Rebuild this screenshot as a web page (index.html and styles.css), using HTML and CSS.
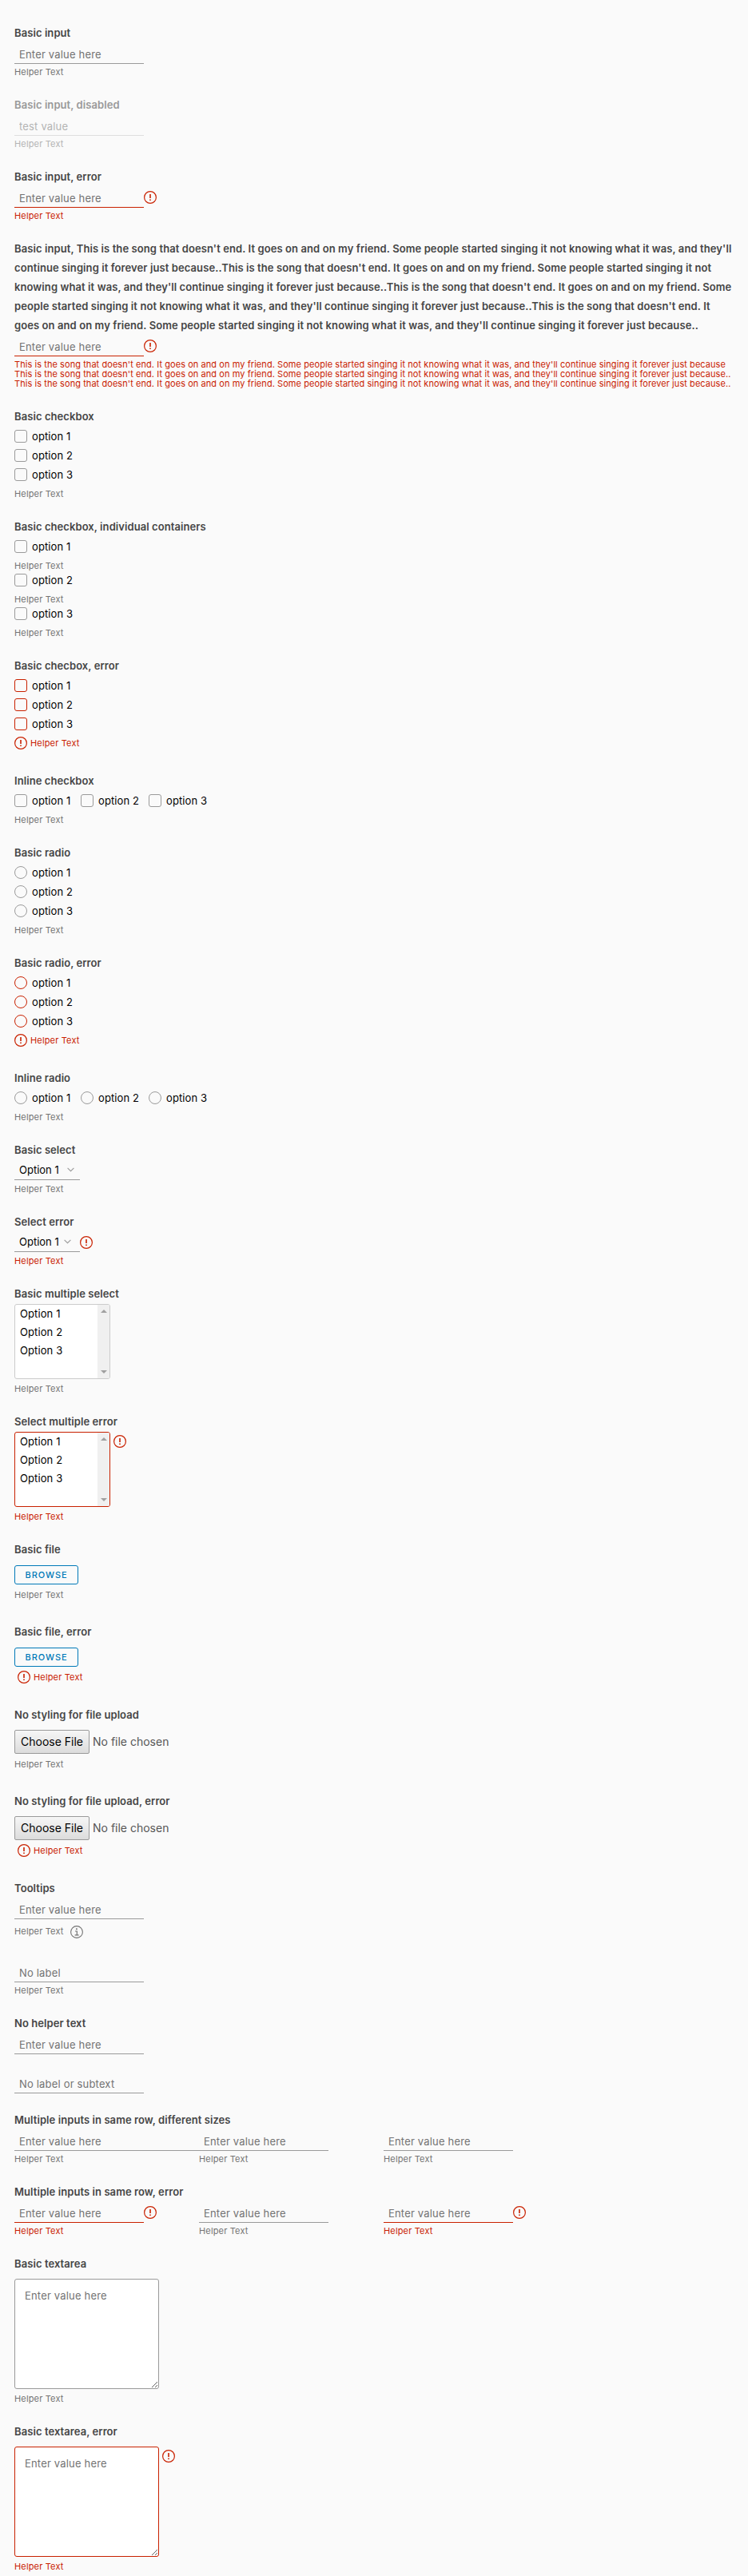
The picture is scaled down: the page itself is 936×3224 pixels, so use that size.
FILE: index.html
```html
<!DOCTYPE html>
<html lang="en"><head><meta charset="utf-8"><title>Forms</title><link rel="stylesheet" href="styles.css"></head>
<body>
<svg width="0" height="0" class="defs">
<symbol id="err" viewBox="0 0 16 16"><circle cx="8" cy="8" r="7.4" fill="none" stroke="currentColor" stroke-width="1.2"/><path d="M8 4v5M8 10.6v1.5" stroke="currentColor" stroke-width="1.6" fill="none"/></symbol>
<symbol id="info" viewBox="0 0 16 16"><circle cx="8" cy="8" r="7.4" fill="none" stroke="currentColor" stroke-width="1.1"/><circle cx="7.9" cy="4.2" r="1" fill="currentColor"/><path d="M6 7h2.3v4.6M5.6 11.9h5" stroke="currentColor" stroke-width="1.2" fill="none"/></symbol>
<symbol id="chev" viewBox="0 0 9 6"><path d="M.6 .8L4.5 4.7L8.4 .8" fill="none" stroke="currentColor" stroke-width="1.1"/></symbol>
</svg>
<form class="form" id="form"></form>
<script src="app.js"></script>
</body></html>
```
FILE: styles.css
```css
* { box-sizing: border-box; }
body { margin: 0; background: #fafafa; color: #000; font: 13px/24px Inter, "Noto Sans", sans-serif; }
.defs { display: block; height: 0; }
.form { display: flex; flex-direction: column; gap: 24px; padding: 30px 18px 6px; }
.group { min-width: 0; }
.label { display: block; font-weight: 600; color: #454545; letter-spacing: .075px; height: 25px; margin-top: -1px; padding-bottom: 1px; white-space: nowrap; }
.label.long { height: auto; letter-spacing: .09px; }
.helper { margin-top: 6px; font-size: 11px; line-height: 12px; color: #737373; letter-spacing: .15px; white-space: nowrap; height: 12px; }
.helper.long { height: auto; letter-spacing: .063px; }
.line { display: flex; align-items: flex-start; padding-top: 2px; height: 26px; }
.line + .helper { margin-top: 4px; }
.input { width: 162px; height: 24px; padding: 0 6px; border: 0; border-bottom: 1px solid #9a9a9a; border-radius: 0; background: none; font: inherit; color: #000; letter-spacing: .18px; outline: 0; }
.input::placeholder, .textarea::placeholder { color: #737373; opacity: 1; }
.icon { width: 16px; height: 16px; flex: none; color: #c92100; display: block; }
.line .icon { margin-top: 3px; }
.error .input { border-color: #c92100; }
.error .helper { color: #c92100; }
.disabled .label { color: #999; }
.disabled .input { color: #b4b4b4; border-color: #dedede; }
.disabled .helper { color: #b4b4b4; }
.opt { display: flex; align-items: center; gap: 6px; height: 24px; letter-spacing: .1px; }
.box { width: 16px; height: 16px; border: 1px solid #9a9a9a; border-radius: 3px; }
.box.radio { border-radius: 50%; }
.error .box { border-color: #c92100; }
.inline { display: grid; grid-template-columns: 83px 85px 83px; }
.msg { display: flex; align-items: center; gap: 4px; height: 24px; }
.msg .helper { margin: 0; }
.select { display: flex; align-items: center; width: 82px; height: 25px; padding: 0 7px 0 6px; border-bottom: 1px solid #9a9a9a; white-space: nowrap; }
.select .chev { width: 9px; height: 6px; margin-left: auto; color: #9a9a9a; }
.select.tight { padding-right: 11px; }
.selrow { display: flex; height: 24px; }
.selrow .icon { margin-top: 5px; }
.multi { display: flex; gap: 4px; height: 94px; }
.multi .icon { margin-top: 4px; }
.list { display: flex; justify-content: space-between; width: 120px; height: 94px; border: 1px solid #ccc; border-radius: 3px; background: #fff; overflow: hidden; }
.error .list { border-color: #c92100; }
.items { padding: 0 6px; line-height: 23px; letter-spacing: .1px; }
.bar { display: flex; flex-direction: column; justify-content: space-between; align-items: center; width: 15px; padding: 6px 0; background: #f0f0f0; }
.up, .down { border: 4px solid transparent; border-top-width: 0; border-bottom-color: #a0a0a0; }
.down { border-bottom-width: 0; border-top: 4px solid #a0a0a0; }
.browse { display: block; width: 80px; height: 24px; margin-top: 7px; padding: 0; border: 1px solid #0079b8; border-radius: 3px; background: none; color: #0079b8; font: 500 11px/22px Inter, sans-serif; letter-spacing: .9px; text-align: center; }
.browse + .helper { margin-top: 7px; margin-bottom: 5px; }
.browse + .msg, .native + .msg { padding-left: 4px; margin-top: 1px; margin-bottom: 0; }
.native { display: flex; align-items: center; gap: 4px; height: 30px; margin-top: 6px; font-size: 14px; color: #565656; }
.choose { width: 94px; height: 30px; padding: 0; border: 1px solid #9a9a9a; border-radius: 2px; background: linear-gradient(#f6f6f6, #dcdcdc); font: inherit; color: #000; text-align: center; }
.native + .helper { margin-top: 7px; margin-bottom: 5px; }
.tip { display: flex; gap: 8px; height: 16px; margin: 8px 0 5px; }
.tip .helper { margin: 1px 0 0; }
.tip .icon { color: #737373; }
.tipgroup { height: 79px; }
.bare { height: 42px; }
.nohelp { height: 49px; }
.last-bare { height: 24px; }
.cols { display: grid; grid-template-columns: repeat(3, 231px); }
.wide { width: 231px; }
.area { display: flex; gap: 4px; margin-top: 6px; height: 138px; }
.area .icon { margin-top: 4px; }
.textarea { display: block; width: 181px; height: 138px; padding: 8px 12px; border: 1px solid #9a9a9a; border-radius: 3px; background: #fff; font: inherit; letter-spacing: .18px; outline: 0; resize: both; }
.error .textarea { border-color: #c92100; }
```
FILE: app.js
```js
const icon = (n, c = 'icon') => `<svg class="${c}"><use href="#${n}"/></svg>`;
const label = (t) => `<label class="label">${t}</label>`;
const helper = '<div class="helper">Helper Text</div>';
const msg = `<div class="msg">${icon('err')}${helper}</div>`;
const input = (ph, err, cls = '') => `<div class="line"><input class="input ${cls}" placeholder="${ph}">${err ? icon('err') : ''}</div>`;
const ENTER = 'Enter value here';
const opts = (kind, sep = '') => [1, 2, 3].map(n => `<div class="opt"><span class="box ${kind}"></span><span>option ${n}</span></div>${sep}`).join('');
const group = (cls, html) => `<section class="group ${cls}">${html}</section>`;
const select = (cls, err) => `<div class="selrow"><div class="select ${cls}">Option 1${icon('chev', 'chev')}</div>${err ? icon('err') : ''}</div>`;
const multi = (err) => `<div class="multi"><div class="list"><div class="items"><div>Option 1</div><div>Option 2</div><div>Option 3</div></div><div class="bar"><span class="up"></span><span class="down"></span></div></div>${err ? icon('err') : ''}</div>`;
const browse = '<button type="button" class="browse">BROWSE</button>';
const native = '<div class="native"><button type="button" class="choose">Choose File</button><span class="none">No file chosen</span></div>';
const area = (err) => `<div class="area"><textarea class="textarea" placeholder="${ENTER}"></textarea>${err ? icon('err') : ''}</div>`;
const col = (err, cls = '') => `<div class="${err ? 'error' : ''}">${input(ENTER, err, cls)}${helper}</div>`;

const songLabel = [
  "Basic input, This is the song that doesn't end. It goes on and on my friend. Some people started singing it not knowing what it was, and they'll",
  "continue singing it forever just because..This is the song that doesn't end. It goes on and on my friend. Some people started singing it not",
  "knowing what it was, and they'll continue singing it forever just because..This is the song that doesn't end. It goes on and on my friend. Some",
  "people started singing it not knowing what it was, and they'll continue singing it forever just because..This is the song that doesn't end. It",
  "goes on and on my friend. Some people started singing it not knowing what it was, and they'll continue singing it forever just because.."
].join('<br>');
const verse = "This is the song that doesn't end. It goes on and on my friend. Some people started singing it not knowing what it was, and they'll continue singing it forever just because";

document.getElementById('form').innerHTML = [
  group('', label('Basic input') + input(ENTER) + helper),
  group('disabled', label('Basic input, disabled') + '<div class="line"><input class="input" value="test value" disabled></div>' + helper),
  group('error', label('Basic input, error') + input(ENTER, true) + helper),
  group('error', `<label class="label long">${songLabel}</label>` + input(ENTER, true) + `<div class="helper long">${verse}<br>${verse}..<br>${verse}..</div>`),
  group('', label('Basic checkbox') + opts('') + helper),
  group('', label('Basic checkbox, individual containers') + opts('', helper)),
  group('error', label('Basic checbox, error') + opts('') + msg),
  group('', label('Inline checkbox') + `<div class="inline">${opts('')}</div>` + helper),
  group('', label('Basic radio') + opts('radio') + helper),
  group('error', label('Basic radio, error') + opts('radio') + msg),
  group('', label('Inline radio') + `<div class="inline">${opts('radio')}</div>` + helper),
  group('', label('Basic select') + select('') + helper),
  group('error', label('Select error') + select('tight', true) + helper),
  group('', label('Basic multiple select') + multi() + helper),
  group('error', label('Select multiple error') + multi(true) + helper),
  group('', label('Basic file') + browse + helper),
  group('error', label('Basic file, error') + browse + msg),
  group('', label('No styling for file upload') + native + helper),
  group('error', label('No styling for file upload, error') + native + msg),
  group('tipgroup', label('Tooltips') + input(ENTER) + `<div class="tip">${helper}${icon('info')}</div>`),
  group('bare', input('No label') + helper),
  group('nohelp', label('No helper text') + input(ENTER)),
  group('last-bare', input('No label or subtext')),
  group('', label('Multiple inputs in same row, different sizes') + `<div class="cols">${col(false, 'wide')}${col()}${col()}</div>`),
  group('', label('Multiple inputs in same row, error') + `<div class="cols">${col(true)}${col()}${col(true)}</div>`),
  group('', label('Basic textarea') + area() + helper),
  group('error', label('Basic textarea, error') + area(true) + helper)
].join('');
```
